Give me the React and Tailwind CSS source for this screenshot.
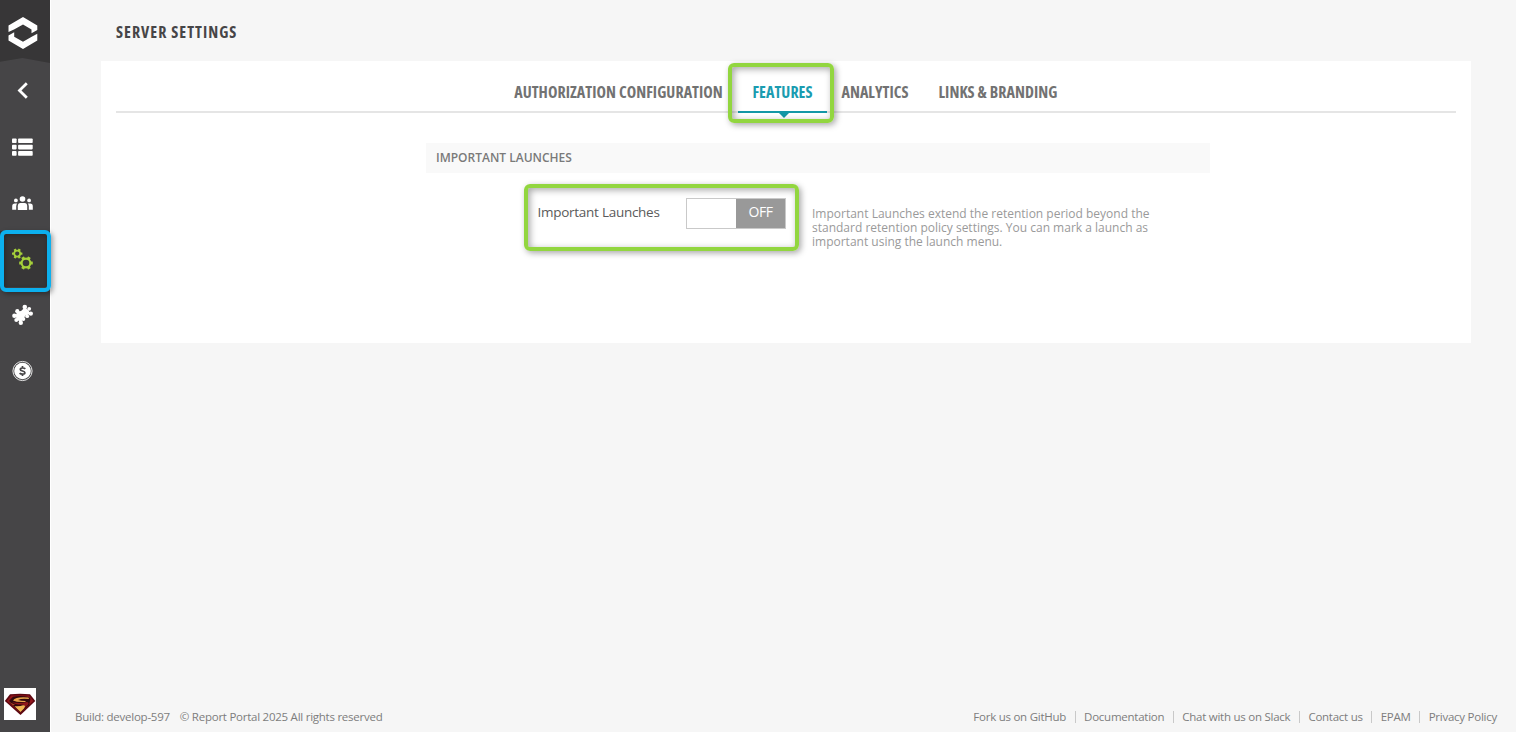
const tabs = [
  { label: 'AUTHORIZATION CONFIGURATION', width: 'w-[239px]' },
  { label: 'FEATURES', width: 'w-[89px]', active: true },
  { label: 'ANALYTICS', width: 'w-[96px]' },
  { label: 'LINKS & BRANDING', width: 'w-[150px]' },
];

const links = ['Fork us on GitHub', 'Documentation', 'Chat with us on Slack', 'Contact us', 'EPAM', 'Privacy Policy'];

function Logo() {
  return (
    <svg width="30" height="34" viewBox="0 0 30 34" fill="#fff">
      <path d="M15 1 29.3 9.5V14L23.5 17.3V13.4L15 8.4 6 13.4 .5 16V9.5Z" />
      <path d="M15 33 .5 24.5V19.5L6.2 16.2V20.8L15 25.8 23.7 20.8 29.3 17.8V24.5Z" />
    </svg>
  );
}

function BackIcon() {
  return (
    <svg width="12" height="18" viewBox="0 0 12 18" fill="none" stroke="#fff" strokeWidth="2.8">
      <path d="M9.8 1.3 2.5 8.5l7.3 7.2" />
    </svg>
  );
}

function ListIcon() {
  return (
    <svg width="22" height="18" viewBox="0 0 22 18" fill="#fff">
      {[0.5, 6.8, 13.1].map((y) => (
        <g key={y}>
          <rect x="0" y={y} width="4.6" height="4.6" rx="0.8" />
          <rect x="6.1" y={y} width="14.6" height="4.6" rx="0.8" />
        </g>
      ))}
    </svg>
  );
}

function MembersIcon() {
  return (
    <svg width="22" height="14" viewBox="0 0 22 14" fill="#fff">
      <g transform="translate(-.5 0)">
        <circle cx="11" cy="3" r="2.8" />
        <circle cx="4.4" cy="4.4" r="1.9" />
        <circle cx="17.6" cy="4.4" r="1.9" />
        <path d="M6.3 14V10.2Q6.3 7 9 7H13Q15.7 7 15.7 10.2V14Z" />
        <path d="M.7 13.7V10.4Q.7 7.6 3.3 7.6H5.7Q4.7 8.6 4.7 10.4V13.7Z" />
        <path d="M21.3 13.7V10.4Q21.3 7.6 18.7 7.6H16.3Q17.3 8.6 17.3 10.4V13.7Z" />
      </g>
    </svg>
  );
}

function Gear({ x, y, r, hole, tooth }) {
  return (
    <g transform={`translate(${x} ${y})`}>
      {[30, 90, 150, 210, 270, 330].map((a) => (
        <rect key={a} x={-tooth / 2} y={-r - 1.4} width={tooth} height="2.5" rx="0.4" transform={`rotate(${a})`} fill="#a5cf3a" />
      ))}
      <circle r={(r + hole) / 2} fill="none" stroke="#a5cf3a" strokeWidth={r - hole} />
    </g>
  );
}

function GearsIcon() {
  return (
    <svg width="22" height="22" viewBox="0 0 22 22">
      <Gear x={5.2} y={5.6} r={3.8} hole={2.1} tooth={2.4} />
      <Gear x={14} y={15} r={5.4} hole={3.3} tooth={3.2} />
    </svg>
  );
}

function PuzzleIcon() {
  return (
    <svg width="22" height="22" viewBox="0 0 22 22" fill="#fff">
      <path d="M5.5 7.5 9 7 12.5 3.8 16.5 6 18 10 13.5 11.5 11 15 9 18 5 16 3.5 11.5Z" />
      <circle cx="12.8" cy="3" r="2.3" />
      <circle cx="17.2" cy="4.8" r="1.9" />
      <circle cx="18.8" cy="9.6" r="2.2" />
      <circle cx="15.2" cy="12.2" r="1.9" />
      <circle cx="5.3" cy="7.2" r="2.1" />
      <circle cx="2.4" cy="11.7" r="2.2" />
      <circle cx="4.3" cy="16" r="2" />
      <circle cx="8.8" cy="18.8" r="2.2" />
      <circle cx="11.3" cy="14.9" r="2" />
    </svg>
  );
}

function CoinIcon() {
  return (
    <svg width="22" height="22" viewBox="0 0 22 22">
      <g transform="translate(-.5 0)">
        <circle cx="11" cy="11" r="9.6" fill="none" stroke="#e5e5e5" strokeWidth="1" />
        <circle cx="11" cy="11" r="8.3" fill="#fff" />
        <path d="M13.8 8.9C12.8 7.7 8.8 7.6 8.8 9.4 8.8 11.4 13.4 10.5 13.4 12.7 13.4 14.6 9.3 14.4 8.1 13.1M11 6V8M11 14V16" fill="none" stroke="#464547" strokeWidth="1.7" />
      </g>
    </svg>
  );
}

function Avatar() {
  return (
    <svg width="32" height="32" viewBox="0 0 32 32">
      <path d="M6 6.3Q16 5 26 6.3L31.3 13 16.5 27 .8 13Z" fill="#5c0710" />
      <path d="M7.2 7.5H24.8L29.3 13 16.5 25 2.8 13Z" fill="#93151b" />
      <path d="M9 8.8Q16 7 25 9L26.5 11 25 17 16.5 24.5 7 16 5 13Z" fill="#31090c" />
      <path d="M9 12.5Q12 8.3 24.5 9.6L25 11Q17.5 10 14 12 17 13 21.5 13V14Q13 14.5 9 12.5Z" fill="#eaa44b" />
      <path d="M8 14.2Q16 15.8 22.5 14 26 14.2 23.5 17.3L21 19.5Q22 17 17 16.6 11 16.5 8 14.2Z" fill="#8f1519" />
      <path d="M10.5 18.2Q16 18.7 19 17.2 22.5 17 20 20.5L16.5 24Z" fill="#f2b451" />
      <path d="M4.5 12.5Q7 15.5 11 16.8L9 17.5Z" fill="#b64a24" />
    </svg>
  );
}

const navItems = [
  { name: 'back', Icon: BackIcon },
  { name: 'projects', Icon: ListIcon },
  { name: 'users', Icon: MembersIcon },
  { name: 'settings', Icon: GearsIcon, active: true },
  { name: 'plugins', Icon: PuzzleIcon },
  { name: 'pricing', Icon: CoinIcon },
];

function Highlight({ className }) {
  return <div className={`pointer-events-none absolute z-10 border-4 ${className}`} />;
}

function Sidebar() {
  return (
    <aside className="relative flex w-[50px] shrink-0 flex-col bg-[#464547]">
      <div className="flex h-[63px] bg-[#373637] pl-[7.5px] pt-4 [clip-path:polygon(0_0,100%_0,100%_100%,45%_92%,0_98%)]">
        <Logo />
      </div>
      <nav className="flex flex-col">
        {navItems.map(({ name, Icon, active }) => (
          <a key={name} className={`flex h-14 items-center justify-center pr-[5px] ${active ? 'bg-[#373637]' : ''}`}>
            <Icon />
          </a>
        ))}
      </nav>
      <div className="mb-3 ml-1 mt-auto flex size-8 bg-white">
        <Avatar />
      </div>
      <Highlight className="left-0 top-[230px] h-[62px] w-[51px] rounded-md border-[#0cb0ee] shadow-[2px_2px_5px_rgba(0,0,0,0.35),inset_1px_1px_5px_rgba(0,0,0,0.3)]" />
    </aside>
  );
}

function Tab({ label, width, active }) {
  return (
    <a
      className={`relative flex h-[52px] justify-center whitespace-nowrap pt-[21px] font-stretch-condensed text-[16px] font-bold leading-5 tracking-[0.04px] ${width} ${
        active ? 'border-b-2 border-[#1497a6] text-[#1a9cb0]' : 'text-[#727272]'
      }`}
    >
      {label}
      {active && (
        <svg className="absolute -bottom-[7px] left-[40px]" width="12" height="6" viewBox="0 0 12 6">
          <path d="M0 0H12L6 6Z" fill="#1497a6" />
        </svg>
      )}
      {active && (
        <Highlight className="-left-[10px] top-[2px] h-[60px] w-[106px] rounded-md border-[#92d63f] shadow-[2px_2px_6px_rgba(0,0,0,0.35),inset_2px_2px_7px_rgba(0,0,0,0.35)]" />
      )}
    </a>
  );
}

export default function App() {
  return (
    <div className="flex h-[732px] w-[1516px] overflow-hidden bg-[#f6f6f6] font-['Open_Sans',sans-serif]">
      <Sidebar />
      <div className="flex flex-1 flex-col border-l border-white">
        <h1 className="h-[61px] pl-[65px] pt-[22px] font-stretch-condensed text-[16px] font-bold leading-5 tracking-[1.02px] text-[#464547]">
          SERVER SETTINGS
        </h1>
        <main className="ml-[50px] flex h-[282px] w-[1370px] flex-col bg-white px-[15px]">
          <div className="flex h-[52px] justify-center border-b-2 border-[#e5e5e5]">
            {tabs.map((tab) => (
              <Tab key={tab.label} {...tab} />
            ))}
          </div>
          <h2 className="ml-[310px] mt-[30px] h-[30px] w-[784px] bg-[#f9f9f9] pl-[10px] text-[12px] font-semibold leading-[29px] text-[#7a7a7a]">
            IMPORTANT LAUNCHES
          </h2>
          <div className="relative ml-[408px] mt-[11px] flex h-[67px] pl-[13.5px]">
            <span className="w-[148.5px] whitespace-nowrap pt-[18px] text-[13.5px] leading-5 tracking-[-0.27px] text-[#5a5a5a]">
              Important Launches
            </span>
            <button className="mt-[14px] flex h-[31px] w-[100px] border border-[#c9c9c9] bg-white text-left">
              <span className="w-[49px]" />
              <span className="h-[29px] flex-1 bg-[#999] text-center text-[14px] leading-[26px] tracking-[-0.5px] text-white">OFF</span>
            </button>
            <p className="ml-[26px] mt-[23px] w-[345px] whitespace-nowrap text-[12px] leading-[14px] text-[#9a9a9a]">
              Important Launches extend the retention period beyond the
              <br />
              standard retention policy settings. You can mark a launch as
              <br />
              important using the launch menu.
            </p>
            <Highlight className="left-0 top-0 h-[67px] w-[275px] rounded-md border-[#92d63f] shadow-[2px_2px_6px_rgba(0,0,0,0.35),inset_2px_2px_7px_rgba(0,0,0,0.35)]" />
          </div>
        </main>
        <footer className="mb-[5px] mt-auto flex items-center justify-between pl-6 pr-[19px] text-[11.5px] leading-5 tracking-[-0.25px] text-[#7d7d7d]">
          <div className="flex gap-[10px]">
            <span>Build: develop-597</span>
            <span>© Report Portal 2025 All rights reserved</span>
          </div>
          <div className="flex items-center">
            {links.map((link, i) => (
              <span key={link} className="flex items-center">
                {i > 0 && <span className="mx-[8.5px] h-3 w-px bg-[#c9c9c9]" />}
                <a>{link}</a>
              </span>
            ))}
          </div>
        </footer>
      </div>
    </div>
  );
}
